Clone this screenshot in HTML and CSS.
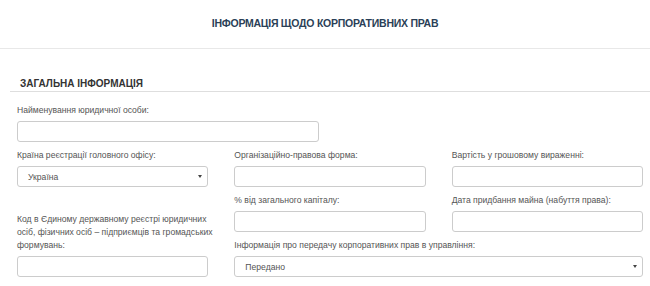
FILE: index.html
```html
<!DOCTYPE html>
<html lang="uk">
<head>
    <meta charset="UTF-8">
    <meta name="viewport" content="width=device-width, initial-scale=1.0">
    <title>Інформація щодо корпоративних прав</title>
    <link rel="stylesheet" href="styles.css">
</head>
<body>
    <div class="page">
        <div class="page-header">
            <h1>ІНФОРМАЦІЯ ЩОДО КОРПОРАТИВНИХ ПРАВ</h1>
        </div>
        <div class="section">
            <h2 class="section-title">ЗАГАЛЬНА ІНФОРМАЦІЯ</h2>
            <div class="form-body">
                <div class="field field-wide">
                    <label>Найменування юридичної особи:</label>
                    <input type="text" class="input">
                </div>
                <div class="form-grid">
                    <div class="field">
                        <label>Країна реєстрації головного офісу:</label>
                        <div class="select"><span>Україна</span><span class="caret"></span></div>
                    </div>
                    <div class="field">
                        <label>Організаційно-правова форма:</label>
                        <input type="text" class="input">
                    </div>
                    <div class="field">
                        <label>Вартість у грошовому вираженні:</label>
                        <input type="text" class="input">
                    </div>
                    <div class="field field-tall">
                        <label>Код в Єдиному державному реєстрі юридичних осіб, фізичних осіб – підприємців та громадських формувань:</label>
                        <input type="text" class="input">
                    </div>
                    <div class="field">
                        <label>% від загального капіталу:</label>
                        <input type="text" class="input">
                    </div>
                    <div class="field">
                        <label>Дата придбання майна (набуття права):</label>
                        <input type="text" class="input">
                    </div>
                    <div class="field field-span">
                        <label>Інформація про передачу корпоративних прав в управління:</label>
                        <div class="select"><span>Передано</span><span class="caret"></span></div>
                    </div>
                </div>
            </div>
        </div>
    </div>
</body>
</html>
```

FILE: styles.css
```css
body {
    font-family: "Liberation Sans", Arial, sans-serif;
    margin: 0;
    padding: 0;
    background-color: #fff;
    color: #555;
}
.page-header {
    height: 48px;
    border-bottom: 1px solid #e8e8e8;
    display: flex;
    align-items: center;
    justify-content: center;
}
.page-header h1 {
    margin: 0 0 3px 0;
    font-size: 10.5px;
    letter-spacing: -0.25px;
    font-weight: bold;
    color: #2b3f57;
}
.section {
    margin-left: 10px;
    padding-top: 29px;
}
.section-title {
    margin: 0;
    padding: 0 0 2px 10px;
    font-size: 10px;
    font-weight: bold;
    color: #333;
    border-bottom: 1px solid #dedede;
}
.form-body {
    padding: 12px 7px 0 7px;
}
.field {
    display: flex;
    flex-direction: column;
}
.field label {
    font-size: 8.6px;
    line-height: 13px;
    margin-bottom: 4px;
}
.field-wide {
    width: 302px;
    margin-bottom: 7px;
}
.field-tall label {
    margin-right: -8px;
}
.input,
.select {
    box-sizing: border-box;
    height: 21px;
    border: 1px solid #ccc;
    border-radius: 3px;
    background-color: #fff;
    margin: 0;
}
.select {
    display: flex;
    align-items: center;
    justify-content: space-between;
    padding: 0 5px 0 10px;
    font-size: 8.6px;
    color: #555;
}
.caret {
    width: 0;
    height: 0;
    border-left: 2px solid transparent;
    border-right: 2px solid transparent;
    border-top: 3px solid #444;
}
.form-grid {
    display: grid;
    grid-template-columns: repeat(3, 1fr);
    column-gap: 26px;
    row-gap: 7px;
}
.field-tall {
    grid-row: span 2;
    justify-content: flex-end;
}
.field-span {
    grid-column: span 2;
}
```
